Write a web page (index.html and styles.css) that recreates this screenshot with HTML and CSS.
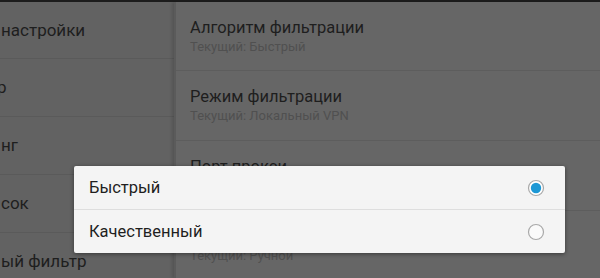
FILE: index.html
```html
<!DOCTYPE html>
<html lang="ru">
<head>
<meta charset="utf-8">
<title>Настройки</title>
<link rel="stylesheet" href="styles.css">
</head>
<body>
<div class="screen">
  <div class="topbar"></div>
  <div class="panes">
    <ul class="left">
      <li class="left-item">настройки</li>
      <li class="left-item shift">р</li>
      <li class="left-item">нг</li>
      <li class="left-item">сок</li>
      <li class="left-item">ый фильтр</li>
    </ul>
    <ul class="right">
      <li class="pref">
        <div class="pref-title">Алгоритм фильтрации</div>
        <div class="pref-sub">Текущий: Быстрый</div>
      </li>
      <li class="pref">
        <div class="pref-title">Режим фильтрации</div>
        <div class="pref-sub">Текущий: Локальный VPN</div>
      </li>
      <li class="pref">
        <div class="pref-title">Порт прокси</div>
        <div class="pref-sub">Текущий: 8080</div>
      </li>
      <li class="pref">
        <div class="pref-title">Прокси</div>
        <div class="pref-sub">Текущий: Ручной</div>
      </li>
    </ul>
  </div>
  <div class="dialog">
    <div class="option">
      <span class="option-label">Быстрый</span>
      <svg class="radio" width="18" height="18" viewBox="0 0 18 18">
        <circle cx="9" cy="9" r="7.5" fill="#ffffff" stroke="#a9a9a9" stroke-width="1.2"/>
        <circle cx="9" cy="9" r="5.2" fill="#1d98d5"/>
      </svg>
    </div>
    <div class="option">
      <span class="option-label">Качественный</span>
      <svg class="radio" width="18" height="18" viewBox="0 0 18 18">
        <circle cx="9" cy="9" r="7.5" fill="#fafafa" stroke="#a9a9a9" stroke-width="1.2"/>
      </svg>
    </div>
  </div>
</div>
</body>
</html>
```

FILE: styles.css
```css
* {
  box-sizing: border-box;
}

html, body {
  margin: 0;
  padding: 0;
  background: #666666;
}

body {
  font-family: Roboto, "Noto Sans", sans-serif;
  width: 600px;
  height: 278px;
  overflow: hidden;
}

.screen {
  position: relative;
  width: 600px;
  height: 278px;
  display: flex;
  flex-direction: column;
}

.topbar {
  height: 2px;
  background: #1c1c1c;
  flex: none;
}

.panes {
  flex: 1;
  display: flex;
  min-height: 0;
}

.left,
.right {
  list-style: none;
  margin: 0;
  padding: 0;
}

.left {
  width: 174px;
  flex: none;
  background: #626262;
}

.left-item {
  height: 58px;
  border-bottom: 1px solid #5a5a5a;
  display: flex;
  align-items: center;
  padding-left: 1px;
  padding-bottom: 1px;
  font-size: 17px;
  color: #1e1e1e;
  white-space: nowrap;
  overflow: hidden;
}

.left-item:first-child {
  height: 57px;
}

.left-item.shift {
  padding-left: 0;
  text-indent: -3px;
}

.right {
  flex: 1;
  background: #666666;
  border-left: 2px solid #5b5b5b;
  box-shadow: -2px 0 3px rgba(0, 0, 0, 0.15);
}

.pref {
  height: 70px;
  border-bottom: 1px solid #5d5d5d;
  padding: 16px 0 0 14px;
}

.pref:first-child {
  height: 69px;
}

.pref-title {
  font-size: 16.5px;
  line-height: 20px;
  color: #1e1e1e;
}

.pref-sub {
  font-size: 13px;
  line-height: 18px;
  color: #505050;
}

.dialog {
  position: absolute;
  left: 74px;
  top: 166px;
  width: 491px;
  height: 87px;
  background: #f4f4f4;
  border-radius: 2px;
  box-shadow: 0 1px 4px rgba(0, 0, 0, 0.45);
  display: flex;
  flex-direction: column;
}

.option {
  flex: 1;
  display: flex;
  align-items: center;
  justify-content: space-between;
  padding: 0 20px 0 15px;
}

.option + .option {
  border-top: 1px solid #dedede;
}

.option-label {
  font-size: 16.5px;
  color: #1f1f1f;
}

.radio {
  display: block;
}
```
